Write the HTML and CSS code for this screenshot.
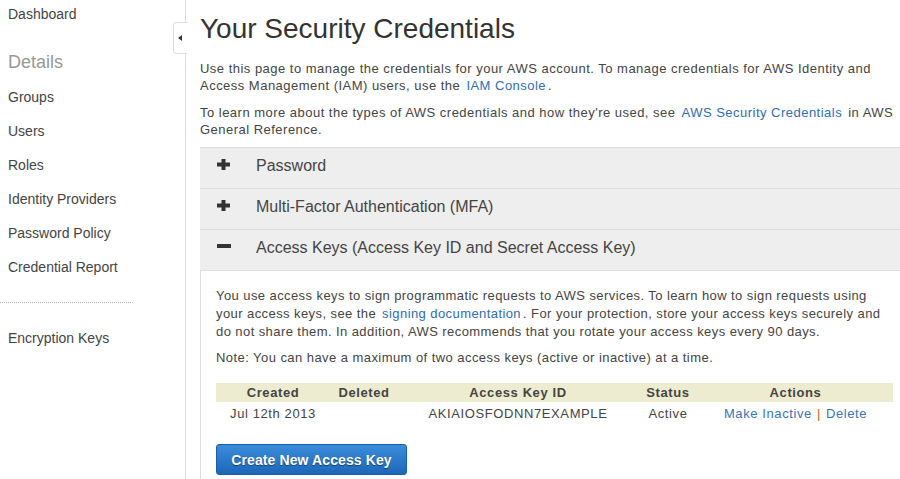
FILE: index.html
```html
<!DOCTYPE html>
<html>
<head>
<meta charset="utf-8">
<link rel="stylesheet" href="styles.css">
</head>
<body>
<div class="layout">
  <nav class="sidebar">
    <a class="nav-item first">Dashboard</a>
    <div class="nav-heading">Details</div>
    <a class="nav-item">Groups</a>
    <a class="nav-item">Users</a>
    <a class="nav-item">Roles</a>
    <a class="nav-item">Identity Providers</a>
    <a class="nav-item">Password Policy</a>
    <a class="nav-item">Credential Report</a>
    <div class="nav-sep"></div>
    <a class="nav-item">Encryption Keys</a>
    <div class="collapse-tab"><span class="tri"></span></div>
  </nav>
  <main class="main">
    <h1 class="title">Your Security Credentials</h1>
    <p class="intro">Use this page to manage the credentials for your AWS account. To manage credentials for AWS Identity and Access Management (IAM) users, use the <a class="link">IAM Console</a>.</p>
    <p class="intro second">To learn more about the types of AWS credentials and how they're used, see <a class="link">AWS Security Credentials</a> in AWS General Reference.</p>

    <div class="accordion">
      <div class="acc-head">
        <svg class="acc-icon" width="14" height="11" viewBox="0 0 14 11"><rect x="0" y="3.5" width="13" height="4" fill="#333"/><rect x="4.5" y="0" width="4" height="11" fill="#333"/></svg>
        <span>Password</span>
      </div>
      <div class="acc-head">
        <svg class="acc-icon" width="14" height="11" viewBox="0 0 14 11"><rect x="0" y="3.5" width="13" height="4" fill="#333"/><rect x="4.5" y="0" width="4" height="11" fill="#333"/></svg>
        <span>Multi-Factor Authentication (MFA)</span>
      </div>
      <div class="acc-head">
        <svg class="acc-icon minus" width="14" height="4" viewBox="0 0 14 4"><rect x="0" y="0" width="14" height="4" fill="#333"/></svg>
        <span>Access Keys (Access Key ID and Secret Access Key)</span>
      </div>
      <div class="acc-body">
        <p class="body-text">You use access keys to sign programmatic requests to AWS services. To learn how to sign requests using your access keys, see the <a class="link">signing documentation</a>. For your protection, store your access keys securely and do not share them. In addition, AWS recommends that you rotate your access keys every 90 days.</p>
        <p class="body-text note">Note: You can have a maximum of two access keys (active or inactive) at a time.</p>
        <table class="keys">
          <colgroup>
            <col class="c1"><col class="c2"><col class="c3"><col class="c4"><col class="c5">
          </colgroup>
          <thead>
            <tr><th>Created</th><th>Deleted</th><th>Access Key ID</th><th>Status</th><th>Actions</th></tr>
          </thead>
          <tbody>
            <tr><td>Jul 12th 2013</td><td></td><td>AKIAIOSFODNN7EXAMPLE</td><td>Active</td><td><a class="act">Make Inactive</a><span class="pipe">|</span><a class="act">Delete</a></td></tr>
          </tbody>
        </table>
        <button class="btn-primary">Create New Access Key</button>
      </div>
    </div>
  </main>
</div>
</body>
</html>
```
FILE: styles.css
```css
* { box-sizing: border-box; }
html, body { margin: 0; padding: 0; background: #fff; }
body {
  font-family: "Liberation Sans", Arial, sans-serif;
  color: #444;
  overflow: hidden;
}
.layout {
  display: flex;
  min-height: 100vh;
}
.sidebar {
  position: relative;
  width: 186px;
  flex: 0 0 186px;
  border-right: 1px solid #dcdcdc;
  padding-top: 4px;
  display: flex;
  flex-direction: column;
}
.nav-item {
  display: block;
  font-size: 14px;
  line-height: 20px;
  padding-left: 8px;
  margin-bottom: 14px;
  color: #444;
  cursor: pointer;
}
.nav-item.first { margin-bottom: 0; }
.nav-heading {
  font-size: 18px;
  line-height: 22px;
  color: #999;
  padding-left: 8px;
  margin-top: 27px;
  margin-bottom: 14px;
}
.nav-sep {
  width: 133px;
  border-top: 1px dotted #bbb;
  margin-top: 11px;
  margin-bottom: 25px;
}
.collapse-tab {
  position: absolute;
  left: 173px;
  top: 22px;
  width: 14px;
  height: 32px;
  background: #fff;
  border: 1px solid #ddd;
  border-right: none;
  border-radius: 4px 0 0 4px;
  display: flex;
  align-items: center;
  justify-content: center;
}
.tri {
  width: 0;
  height: 0;
  border-top: 3.5px solid transparent;
  border-bottom: 3.5px solid transparent;
  border-right: 4px solid #333;
  margin-left: -1px;
}
.main {
  flex: 1;
  padding: 12px 0 0 14px;
  min-width: 0;
}
.title {
  margin: 0;
  font-size: 28px;
  line-height: 34px;
  font-weight: normal;
  color: #333;
}
.intro {
  margin: 14px 0 0;
  font-size: 13px;
  line-height: 17px;
  letter-spacing: 0.48px;
}
.intro.second { margin-top: 10px; }
.link {
  color: #2f6db5;
  cursor: pointer;
  margin: 0 2px 0 2px;
}
.accordion {
  margin-top: 9px;
  border-top: 1px solid #ddd;
}
.acc-head {
  display: flex;
  align-items: center;
  height: 41px;
  padding: 9px 0 13px 17px;
  background: #eee;
  border-bottom: 1px solid #ddd;
  font-size: 16px;
  line-height: 18px;
  color: #444;
}
.acc-icon {
  flex: 0 0 auto;
  width: 14px;
  margin-right: 25px;
  margin-bottom: 3px;
}
.acc-icon.minus { margin-bottom: 5px; }
.acc-body {
  border-left: 1px solid #ddd;
  padding: 16px 8px 20px 15px;
}
.body-text {
  margin: 0;
  font-size: 13px;
  line-height: 18px;
  letter-spacing: 0.42px;
}
.body-text.note { margin-top: 8px; letter-spacing: 0.44px; }
.keys {
  margin-top: 16px;
  width: 677px;
  border-collapse: collapse;
  table-layout: fixed;
  font-size: 13px;
  letter-spacing: 0.6px;
}
.c1 { width: 114px; }
.c2 { width: 68px; }
.c3 { width: 240px; }
.c4 { width: 60px; }
.c5 { width: 195px; }
.keys th {
  background: #eeecd0;
  font-weight: bold;
  height: 19px;
  line-height: 19px;
  padding: 0;
  text-align: center;
  color: #444;
}
.keys td {
  padding: 2px 0 0;
  line-height: 20px;
  text-align: center;
  color: #444;
}
.act {
  color: #3a74bd;
  cursor: pointer;
}
.pipe {
  color: #b8661c;
  margin: 0 5px;
}
.btn-primary {
  display: block;
  margin-top: 20px;
  width: 191px;
  height: 31px;
  padding: 0;
  border: 1px solid #1b5ea8;
  border-radius: 3px;
  background: linear-gradient(#3a8ddb, #1d66b8);
  color: #fff;
  font-family: "Liberation Sans", Arial, sans-serif;
  font-size: 14px;
  font-weight: bold;
  letter-spacing: 0.1px;
  text-shadow: 0 1px 1px rgba(0,0,0,0.45);
  cursor: pointer;
}
```
